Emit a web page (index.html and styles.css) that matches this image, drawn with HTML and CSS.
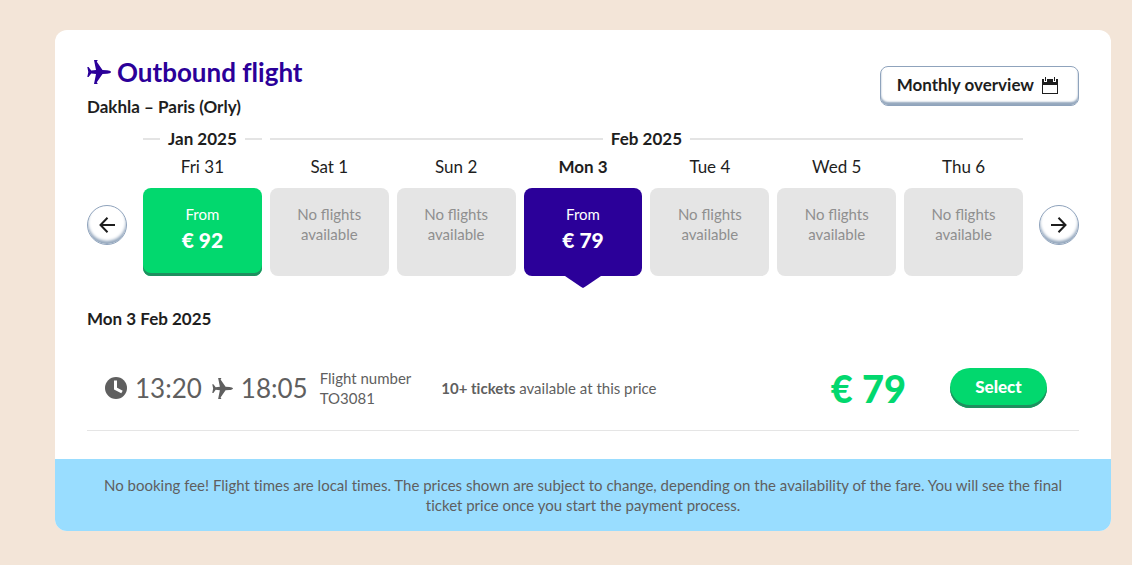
FILE: index.html
```html
<!DOCTYPE html>
<html lang="en">
<head>
  <meta charset="UTF-8" />
  <meta name="viewport" content="width=device-width, initial-scale=1.0" />
  <title>Outbound flight</title>
  <link rel="stylesheet" href="styles.css">
</head>
<body>
  <svg class="sprite" aria-hidden="true">
    <symbol id="plane" viewBox="0 0 24 24">
      <path d="M24 12c0 1-2.200 1.700-4 1.800l-4.500.2-5.700 8.300 1 1.700H7l2-10-4.800-.5L1.600 17H.3l1-5-1-5h1.300l2.600 3.500L9 10 7 0h3.800l-1 1.700 5.700 8.300 4.500.2c1.800.1 4 .8 4 1.800z"/>
    </symbol>
  </svg>
  <main class="card">
    <div class="content">
      <header class="header">
        <div class="heading">
          <h1 class="title"><svg class="title-icon" aria-hidden="true"><use href="#plane"/></svg>Outbound flight</h1>
          <p class="route">Dakhla – Paris (Orly)</p>
        </div>
        <button class="overview" type="button">
          Monthly overview
          <svg class="calendar-icon" viewBox="0 0 16 17" aria-hidden="true">
            <path fill-rule="evenodd" d="M0 2h16v15H0zM1 8v8h14V8z"/>
            <path class="ring" d="M2 2h3v3H2zM11 2h3v3h-3z"/>
            <path d="M3 0h1v4H3zM12 0h1v4h-1z"/>
          </svg>
        </button>
      </header>

      <section class="carousel">
        <button class="arrow" type="button" aria-label="Previous days">
          <svg viewBox="0 0 16 16" aria-hidden="true"><path d="M16 8H1.500M8.500 .7L1.500 8l7 7.300"/></svg>
        </button>
        <div class="calendar">
          <div class="months">
            <div class="month">Jan 2025</div>
            <div class="month month-long">Feb 2025</div>
          </div>
          <div class="days">
            <div class="day">
              <label class="day-name" for="d31">Fri 31</label>
              <button class="fare available" id="d31" type="button">From <strong>€ 92</strong></button>
            </div>
            <div class="day">
              <label class="day-name" for="d1">Sat 1</label>
              <button class="fare" id="d1" type="button" disabled>No flights available</button>
            </div>
            <div class="day">
              <label class="day-name" for="d2">Sun 2</label>
              <button class="fare" id="d2" type="button" disabled>No flights available</button>
            </div>
            <div class="day">
              <label class="day-name current" for="d3">Mon 3</label>
              <button class="fare selected" id="d3" type="button">From <strong>€ 79</strong></button>
            </div>
            <div class="day">
              <label class="day-name" for="d4">Tue 4</label>
              <button class="fare" id="d4" type="button" disabled>No flights available</button>
            </div>
            <div class="day">
              <label class="day-name" for="d5">Wed 5</label>
              <button class="fare" id="d5" type="button" disabled>No flights available</button>
            </div>
            <div class="day">
              <label class="day-name" for="d6">Thu 6</label>
              <button class="fare" id="d6" type="button" disabled>No flights available</button>
            </div>
          </div>
        </div>
        <button class="arrow" type="button" aria-label="Next days">
          <svg viewBox="0 0 16 16" aria-hidden="true"><path d="M0 8h14.500M7.500 .7l7 7.300-7 7.300"/></svg>
        </button>
      </section>

      <h2 class="date">Mon 3 Feb 2025</h2>
      <div class="flight">
        <div class="times">
          <svg class="clock-icon" viewBox="0 0 22 22" aria-hidden="true">
            <circle cx="11" cy="11" r="11"/>
            <path d="M10.500 3.500v8l6.500 3.500"/>
          </svg>
          <span>13:20</span>
          <svg class="plane-icon" aria-hidden="true"><use href="#plane"/></svg>
          <span>18:05</span>
        </div>
        <div class="number">Flight number<br>TO3081</div>
        <p class="tickets"><strong>10+ tickets</strong> available at this price</p>
        <div class="price">€ 79</div>
        <button class="select" type="button">Select</button>
      </div>
    </div>
    <footer class="notice">No booking fee! Flight times are local times. The prices shown are subject to change, depending on the availability of the fare. You will see the final ticket price once you start the payment process.</footer>
  </main>
</body>
</html>
```

FILE: styles.css
```css
* {
  box-sizing: border-box;
}
body {
  margin: 0;
  padding: 30px 21px 34px 55px;
  background: #f3e5d8;
  color: #1e1e1e;
  font-family: Lato, sans-serif;
  font-size: 15px;
  line-height: 20px;
  font-variant-ligatures: none;
}
h1, h2, p {
  margin: 0;
}
button {
  font-family: inherit;
  cursor: pointer;
}
.sprite {
  display: none;
}
.card {
  background: white;
  border-radius: 12px;
  overflow: hidden;
}
.content {
  padding: 30px 32px 28px;
}
.header {
  display: flex;
  justify-content: space-between;
  align-items: flex-start;
}
.title {
  display: flex;
  align-items: center;
  gap: 6px;
  color: #2b0099;
  font-size: 26px;
  line-height: 24px;
}
.title-icon {
  width: 24px;
  height: 24px;
  fill: currentColor;
}
.route {
  margin-top: 13px;
  font-size: 17px;
  font-weight: bold;
}
.overview {
  display: flex;
  align-items: center;
  gap: 8px;
  height: 40px;
  margin-top: 6px;
  padding: 0 20px 4px 16px;
  background: white;
  border: 1px solid #8fa3bc;
  border-radius: 8px;
  box-shadow: inset 0 -3px 2px #94a7bd;
  color: #1e1e1e;
  font-size: 17px;
  font-weight: bold;
}
.calendar-icon {
  width: 16px;
  height: 17px;
  margin-top: 2px;
  fill: currentColor;
}
.ring {
  fill: white;
}

/* day picker */
.carousel {
  display: flex;
  align-items: flex-end;
  gap: 16px;
  margin-top: 12px;
}
.arrow {
  flex: none;
  display: flex;
  align-items: center;
  justify-content: center;
  width: 40px;
  height: 40px;
  margin-bottom: 31px;
  padding: 0;
  background: white;
  border: 1px solid #8fa3bc;
  border-radius: 50%;
  box-shadow: inset 0 -3px 3px #94a7bd;
}
.arrow svg {
  width: 16px;
  height: 16px;
  fill: none;
  stroke: #1e1e1e;
  stroke-width: 2;
}
.calendar {
  flex: 1;
}
.months, .days {
  display: grid;
  grid-template-columns: repeat(7, 1fr);
  gap: 8px;
}
.month {
  display: flex;
  align-items: center;
  gap: 8px;
  font-size: 17px;
  font-weight: bold;
  white-space: nowrap;
}
.month::before, .month::after {
  content: "";
  flex: 1;
  height: 2px;
  background: #e4e4e4;
}
.month-long {
  grid-column: span 6;
}
.days {
  margin-top: 6px;
}
.day {
  display: flex;
  flex-direction: column;
  gap: 9px;
  text-align: center;
}
.day-name {
  font-size: 17px;
  line-height: 24px;
}
.current {
  font-weight: bold;
}
.fare {
  display: flex;
  flex-direction: column;
  align-items: center;
  height: 88px;
  padding: 16px 20px;
  background: #e5e5e5;
  border: none;
  border-radius: 8px;
  color: #8f8f8f;
  font-size: 15px;
  line-height: 20px;
}
.fare strong {
  margin-top: 4px;
  font-size: 21px;
  line-height: 24px;
  font-weight: 900;
}
.available {
  background: #02d86e;
  box-shadow: inset 0 -3px 0 #1f8f5f;
  color: white;
}
.selected {
  position: relative;
  background: #2b0099;
  color: white;
}
.selected::after {
  content: "";
  position: absolute;
  top: 100%;
  left: 50%;
  width: 36px;
  height: 12px;
  margin-left: -18px;
  background: #2b0099;
  clip-path: polygon(0 0, 100% 0, 56% 90%, 50% 100%, 44% 90%);
}

/* chosen flight */
.date {
  margin-top: 33px;
  font-size: 17px;
  line-height: 20px;
}
.flight {
  display: flex;
  align-items: center;
  margin-top: 17px;
  padding: 22px 32px 22px 18px;
  border-bottom: 1px solid #e5e5e5;
  color: #5f5f5f;
}
.times {
  display: flex;
  align-items: center;
  gap: 8px;
  font-size: 26px;
}
.clock-icon {
  width: 22px;
  height: 22px;
  fill: currentColor;
}
.clock-icon path {
  fill: none;
  stroke: white;
  stroke-width: 3;
}
.plane-icon {
  width: 21px;
  height: 21px;
  margin-left: 2px;
  fill: currentColor;
}
.number {
  margin-left: 12px;
}
.tickets {
  margin-left: 30px;
}
.price {
  margin-left: auto;
  color: #02d86e;
  font-size: 38px;
  font-weight: 900;
}
.select {
  width: 97px;
  height: 40px;
  margin-left: 44px;
  padding: 0 0 3px;
  background: #02d86e;
  border: none;
  border-radius: 20px;
  box-shadow: inset 0 -3px 0 #1f8f5f;
  color: white;
  font-size: 17px;
  font-weight: 900;
}
.notice {
  padding: 16px 40px;
  background: #99ddff;
  color: #5f5f5f;
  text-align: center;
}
```
